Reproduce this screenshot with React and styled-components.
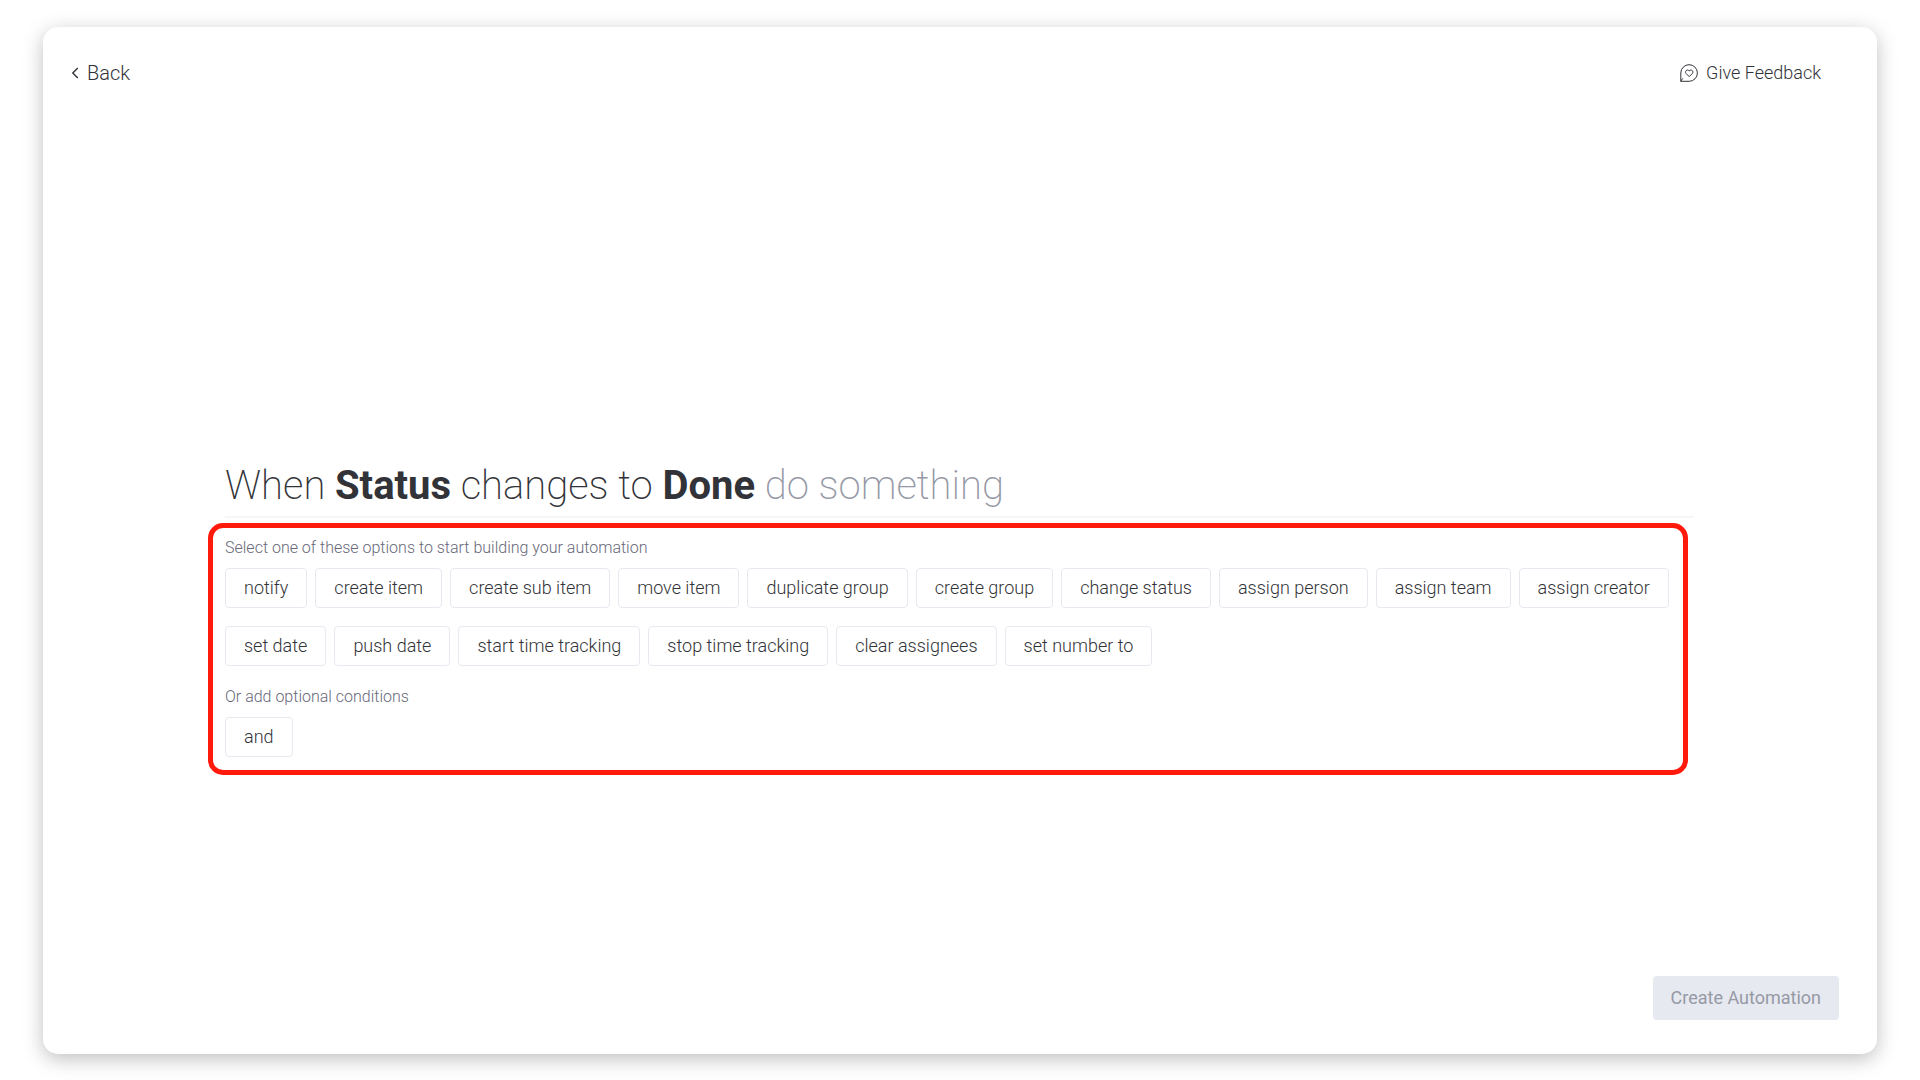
import styled, { createGlobalStyle } from 'styled-components'

const GlobalStyle = createGlobalStyle`
    * {
        box-sizing: border-box;
    }

    body {
        margin: 0;
        font-family: Roboto, "Liberation Sans", sans-serif;
        color: #323338;
        background-color: #ffffff;
    }

    button {
        font-family: inherit;
        color: inherit;
        cursor: pointer;
    }
`;

const Page = styled.div`
    display: flex;
    min-height: 100vh;
    padding: 27px 43px 26px;
`;

const Card = styled.div`
    display: flex;
    flex: 1;
    flex-direction: column;
    border-radius: 15px;
    background-color: #ffffff;
    box-shadow: 0 5px 20px rgba(0, 0, 0, 0.25);
`;

const Header = styled.header`
    display: flex;
    align-items: center;
    justify-content: space-between;
    padding: 34px 56px 0 28px;
`;

const HeaderButton = styled.button`
    display: flex;
    align-items: center;
    gap: 8px;
    padding: 0;
    border: none;
    background-color: transparent;
    font-size: ${prop => prop.$size};
    font-weight: 300;
    line-height: 24px;
`;

const Main = styled.main`
    display: flex;
    flex: 1;
    flex-direction: column;
    justify-content: center;
    padding: 174px 183px 0 165px;
`;

const Sentence = styled.h1`
    margin: 0 0 5px 17px;
    padding-bottom: 4px;
    border-bottom: 2px solid #f5f6f8;
    font-size: 40px;
    font-weight: 200;
    line-height: 52px;

    strong {
        font-weight: 700;
    }
`;

const Placeholder = styled.span`
    color: #9699a6;
`;

const Highlight = styled.div`
    display: flex;
    flex-direction: column;
    gap: 21px;
    margin-right: 6px;
    padding: 10px 12px 13px;
    border: 5px solid #ff1a0c;
    border-radius: 15px;
`;

const Group = styled.section`
    display: flex;
    flex-direction: column;
    gap: 10px;
`;

const GroupTitle = styled.h2`
    margin: 0;
    color: #676879;
    font-size: 16px;
    font-weight: 300;
    line-height: 20px;
`;

const Options = styled.div`
    display: flex;
    flex-wrap: wrap;
    gap: 18px 8px;
`;

const Option = styled.button`
    height: 40px;
    padding: 0 18px 2px;
    border: 1px solid #e6e9ef;
    border-radius: 4px;
    background-color: #ffffff;
    font-size: 18px;
    font-weight: 300;
`;

const Footer = styled.footer`
    display: flex;
    justify-content: flex-end;
    padding: 0 38px 34px;
`;

const CreateButton = styled.button`
    height: 44px;
    padding: 0 18px 2px;
    border: none;
    border-radius: 4px;
    background-color: #e6e9ef;
    font-size: 18px;
    font-weight: 400;

    &:disabled {
        color: #9699a6;
        cursor: not-allowed;
    }
`;

const actions = [
    'notify',
    'create item',
    'create sub item',
    'move item',
    'duplicate group',
    'create group',
    'change status',
    'assign person',
    'assign team',
    'assign creator',
    'set date',
    'push date',
    'start time tracking',
    'stop time tracking',
    'clear assignees',
    'set number to',
];

const conditions = ['and'];

function BackIcon() {
    return (
        <svg width="8" height="12" viewBox="0 0 8 12" fill="none" stroke="currentColor" strokeWidth="1.4" aria-hidden="true">
            <path d="M6.8 1 L1.8 6 L6.8 11" />
        </svg>
    )
}

function FeedbackIcon() {
    return (
        <svg width="18" height="18" viewBox="0 0 18 18" fill="none" stroke="currentColor" strokeWidth="1" strokeLinejoin="round" aria-hidden="true">
            <path d="M0.8 17.3 V9 A8.3 8.3 0 1 1 9.2 17.3 Z M0.8 17.3 L2.7 14.4" />
            <path d="M9.2 12.6 L6 9.4 C4.4 7.4 7 4.7 9.2 6.9 C11.4 4.7 14 7.4 12.4 9.4 Z" />
        </svg>
    )
}

function OptionGroup(props) {
    const { title, options } = props;

    return (
        <Group>
            <GroupTitle>{title}</GroupTitle>
            <Options>
                {options.map(option => (
                    <Option key={option} type="button">{option}</Option>
                ))}
            </Options>
        </Group>
    )
}

export default function App() {
    return (
        <>
            <GlobalStyle />
            <Page>
                <Card>
                    <Header>
                        <HeaderButton type="button" $size="20px">
                            <BackIcon />
                            Back
                        </HeaderButton>
                        <HeaderButton type="button" $size="18px">
                            <FeedbackIcon />
                            Give Feedback
                        </HeaderButton>
                    </Header>
                    <Main>
                        <Sentence>
                            When <strong>Status</strong> changes to <strong>Done</strong> <Placeholder>do something</Placeholder>
                        </Sentence>
                        <Highlight>
                            <OptionGroup title="Select one of these options to start building your automation" options={actions} />
                            <OptionGroup title="Or add optional conditions" options={conditions} />
                        </Highlight>
                    </Main>
                    <Footer>
                        <CreateButton type="button" disabled>Create Automation</CreateButton>
                    </Footer>
                </Card>
            </Page>
        </>
    )
}
